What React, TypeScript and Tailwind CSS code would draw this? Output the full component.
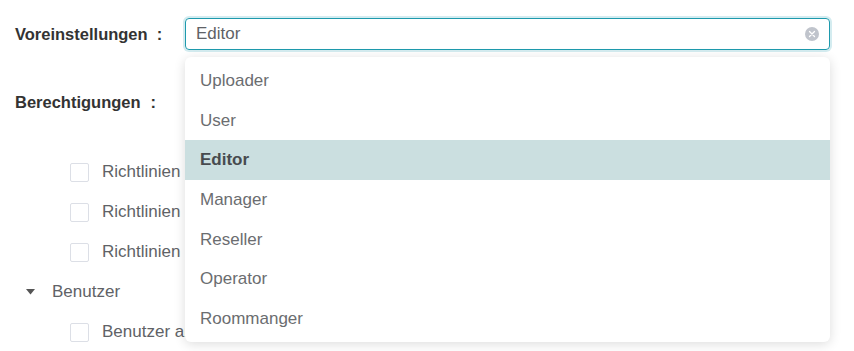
import { useState } from 'react';

const presets = ['Uploader', 'User', 'Editor', 'Manager', 'Reseller', 'Operator', 'Roommanger'];

function Checkbox() {
  return <span className="w-[19px] h-[19px] border border-[#dcdfe6] rounded-[2px] bg-white shrink-0" />;
}

function LeafRow({ label }: { label: string }) {
  return (
    <div className="h-10 flex items-center pl-[70px] gap-[13px]">
      <Checkbox />
      <span className="text-[#606266] whitespace-nowrap">{label}</span>
    </div>
  );
}

export default function App() {
  const [value] = useState('Editor');

  return (
    <main className="w-[854px] h-[351px] bg-white overflow-hidden relative font-['Liberation_Sans',Arial,sans-serif] text-[17px]">
      {/* Voreinstellungen */}
      <div className="flex items-center pt-[18px] h-[50px]">
        <label className="w-[185px] pl-[15px] text-[16.5px] font-bold text-[#333]">
          Voreinstellungen<span className="ml-[9px]">:</span>
        </label>
        <div className="relative w-[645px]">
          <div className="h-8 rounded-[4px] border border-[#1e9aad] ring-2 ring-[#d4ecf0] flex items-center pl-[10px] pr-[10px]">
            <span className="flex-1 text-[#606266]">{value}</span>
            <span className="w-[14px] h-[14px] rounded-full bg-[#c0c4cc] flex items-center justify-center">
              <svg width="8" height="8" viewBox="0 0 8 8">
                <path d="M1.5 1.5 L6.5 6.5 M6.5 1.5 L1.5 6.5" stroke="white" strokeWidth="1.3" strokeLinecap="round" />
              </svg>
            </span>
          </div>

          {/* dropdown menu */}
          <ul className="absolute left-0 top-[39px] w-full bg-white rounded-[6px] shadow-[0_2px_12px_rgba(0,0,0,0.14)] pt-[4px] pb-[3px] z-10">
            {presets.map((p) => (
              <li
                key={p}
                className={
                  p === value
                    ? 'h-[39.67px] flex items-center pl-[15px] bg-[#cbdfe0] text-[#474b4f] font-bold'
                    : 'h-[39.67px] flex items-center pl-[15px] text-[#6b6d70]'
                }
              >
                {p}
              </li>
            ))}
          </ul>
        </div>
      </div>

      {/* Berechtigungen */}
      <div className="h-[32px] mt-[36px] flex items-center pl-[15px]">
        <span className="text-[16.5px] font-bold text-[#333]">
          Berechtigungen<span className="ml-[10px]">:</span>
        </span>
      </div>

      <div className="mt-[34px]">
        <LeafRow label="Richtlinien anzeigen" />
        <LeafRow label="Richtlinien bearbeiten" />
        <LeafRow label="Richtlinien löschen" />
        <div className="h-10 flex items-center pl-[26px] gap-[17px]">
          <svg width="9" height="6" viewBox="0 0 9 6">
            <path d="M0 0 H9 L4.5 5.5 Z" fill="#555" />
          </svg>
          <span className="text-[#606266]">Benutzer</span>
        </div>
        <LeafRow label="Benutzer anzeigen" />
      </div>
    </main>
  );
}
